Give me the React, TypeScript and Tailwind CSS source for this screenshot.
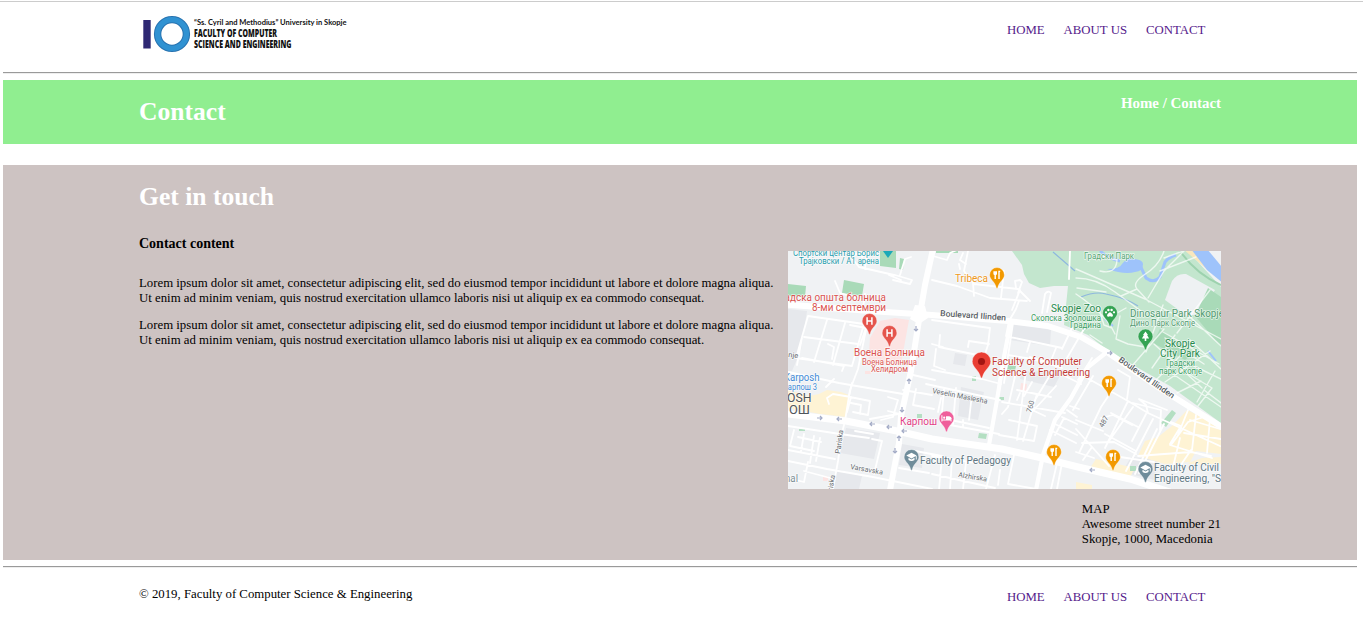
import React from "react";

const links = ["HOME", "ABOUT US", "CONTACT"];

function Nav() {
  return (
    <nav className="flex gap-[19px] pr-[15.6px] text-[#551a8b]">
      {links.map((l) => (
        <a key={l} href="#" className="whitespace-nowrap">
          {l}
        </a>
      ))}
    </nav>
  );
}

function Rule() {
  return <div className="h-[2px] border-t border-b border-t-[#9a9a9a] border-b-[#eeeeee]" />;
}

function Logo() {
  return (
    <svg width="210" height="44" viewBox="0 0 210 44" className="block" fontFamily="'Open Sans', 'Noto Sans', sans-serif">
      <rect x="4.3" y="8" width="7.4" height="28.5" fill="#2e2873" />
      <circle cx="33" cy="22" r="14.4" fill="none" stroke="#2873b0" strokeWidth="7.4" />
      <circle cx="33" cy="22" r="14.4" fill="none" stroke="#3092d2" strokeWidth="5.4" />
      <g fill="#111">
        <text x="55" y="13.4" fontSize="8.4" fontWeight="700" fontFamily="Lato, sans-serif" textLength="152.5" lengthAdjust="spacingAndGlyphs">
          “Ss. Cyril and Methodius” University in Skopje
        </text>
        <text x="55" y="24.8" fontSize="9.8" fontWeight="800" textLength="83" lengthAdjust="spacingAndGlyphs">
          FACULTY OF COMPUTER
        </text>
        <text x="55" y="36" fontSize="9.8" fontWeight="800" textLength="97.5" lengthAdjust="spacingAndGlyphs">
          SCIENCE AND ENGINEERING
        </text>
      </g>
    </svg>
  );
}

type PinProps = { x: number; y: number; color: string; s?: number; children?: React.ReactNode };

// x, y is the centre of the pin's head
function Pin({ x, y, color, s = 1, children }: PinProps) {
  return (
    <g transform={`translate(${x} ${y}) scale(${s})`}>
      <path d="M0-7.5A7.4 7.4 0 0 1 7.4 0C7.4 4.5 2.2 6.5 .8 12.4Q0 14.2-.8 12.4C-2.2 6.5-7.4 4.5-7.4 0A7.4 7.4 0 0 1 0-7.5Z" fill={color} stroke="#fff" strokeOpacity=".55" strokeWidth=".7" />
      {children}
    </g>
  );
}

function Food({ x, y }: { x: number; y: number }) {
  return (
    <Pin x={x} y={y} color="#f29900">
      <path d="M-3.6-3.8h3.6v2.6q0 1.2-1.2 1.2h-1.2q-1.2 0-1.2-1.2z" fill="#fff" />
      <path d="M-1.8-1v5M2 4V-3.6h1.2" fill="none" stroke="#fff" strokeWidth="1.4" />
    </Pin>
  );
}

function Hospital({ x, y }: { x: number; y: number }) {
  return (
    <Pin x={x} y={y} color="#e5554c">
      <path d="M-2.4-3.7v7.4M2.4-3.7v7.4M-2.4 0h4.8" fill="none" stroke="#fff" strokeWidth="1.5" />
    </Pin>
  );
}

function School({ x, y }: { x: number; y: number }) {
  return (
    <Pin x={x} y={y} color="#6f8c9a">
      <path d="M-5.2-1.4 0-4.2l5.2 2.8L0 1.4zM-3 .8v2.2Q0 5 3 3V.8L0 2.4zM4.3-1h.9v3.6h-.9z" fill="#fff" />
    </Pin>
  );
}

type LabelProps = {
  x: number;
  y: number;
  w: number;
  size?: number;
  fill: string;
  rotate?: number;
  weight?: number;
  children: string;
};

function Label({ x, y, w, size = 10, fill, rotate = 0, weight = 400, children }: LabelProps) {
  return (
    <text
      transform={`translate(${x} ${y}) rotate(${rotate})`}
      fontSize={size}
      fontWeight={weight}
      fill={fill}
      textLength={w}
      lengthAdjust="spacingAndGlyphs"
      stroke="#fff"
      strokeOpacity=".65"
      strokeWidth="1.6"
      strokeLinejoin="round"
      paintOrder="stroke"
    >
      {children}
    </text>
  );
}

function CampusMap() {
  return (
    <svg width="433" height="238" viewBox="788 251 433 238" className="block" fontFamily="Roboto, 'Liberation Sans', sans-serif">
      <rect x="788" y="251" width="433" height="238" fill="#f0f2f4" />

      {/* built-up blocks */}
      <g fill="#e6e8ec">
        <path d="M788 309 807 311 801 350 792 371H788zM846 428l34 5-6 26-34-6zM1013 323l38 7-1 16-40-6zM955 353l12 2-2 11-12-2zM961 387l23 5-6 28-20-4zM1022 371l40 1-8 15-34-8zM902 444l22 4-2 20-23-3zM1131 457l27 3-4 20-32-8z" />
        <path d="M836 469l26 7-3 13h-26z" />
      </g>
      <path d="M895 318l14 2-8 44-33 1 2-27 10-17zM1021 383l6 1-1 8-6-1zM865 371h6v3h-6zM823 476h5v5h-5z" fill="#fce4e3" />
      <g fill="#fef3d4">
        <path d="M788 390l21 6 10-2 8-4 14 2 8 3-3 22-26-3-32-6zM1187 410l34 16v28l-25-3-6 11-25 2-27-8 7-15 13-4 15-12zM1096 459l39 9-6 11-39-11zM1076 482l16 3v4h-16zM1188 463l14-5 19-1v7h-32z" />
      </g>

      {/* parks */}
      <path d="M1014 251H1188L1221 287V423L1170 386 1124 360 1107 350 1088 335 1064 325 1068 286 1054 286 1040 288 1029 283 1024 274 1022 265 1012 251z" fill="#c3e6ce" />
      <path d="M1165 300 1172 281Q1177 273 1186 274L1215 290 1199 314 1187 316z" fill="#eef1f3" />
      <path d="M1208 288l13 9v50l-26-31z" fill="#a9dab8" />
      <path d="M1160 329l34 24-9 7-32-17z" fill="#a9dab8" />
      <path d="M880 251h16v17l-16-2zM900 258l4 1-1 11-4-1zM844 280l20 4-2 12-20-3zM788 284l18 2-1 11-17-1zM936 251h22v2h-22zM1008 365l8 1-1 5-8-1z" fill="#a9dab8" />
      <path d="M972 376h4v5h-4zM998 397h6v3h-6zM979 433l8 1-1 5-8-1zM917 414h5v4h-5zM1172 410l4 3-10 14-5-4zM1130 466h6v5h-6zM799 429h6v2h-6z" fill="#b4dfc2" />

      {/* water */}
      <path d="M1183 249h22l18 20v14z" fill="#f9e7bd" />
      <path d="M1191 249h16l16 19v15l-16-13z" fill="#9ec3fb" />
      <path d="M1180 251Q1196 274 1221 285" fill="none" stroke="#9dd2ae" strokeWidth="2" />
      <path d="M1107 269q13 0 15-5 6-8 13-5 8 1 8 5 0 7-8 8-10 3-28-3z" fill="#9ec3fb" />
      <g fill="none" stroke="#9ec3fb">
        <path d="M1100 251q9 8 20 10M1138 261l8 17q8 6 14-1l5-15q4-5 11-7" strokeWidth="3" />
        <path d="M1081 297q14-6 25-3 20 4 32 12M1053 252l22 19" strokeWidth="1.2" stroke="#8eb7df" />
        <path d="M1105 319l8 7M1208 351l8 10" strokeWidth="2" />
      </g>

      {/* minor streets */}
      <g fill="none" stroke="#fff" strokeWidth="1.8" strokeLinejoin="round" strokeLinecap="round">
        <path d="M858 253l-7 4 8 10 35 8M868 252l-6 5M895 275l17 5-2 4-17-4M835 281l5 12 23 7M865 294l-2 14M867 251l-2 18M900 275l5-16 6-2M889 275l12 5" />
        <path d="M808 316l56 8-12 42-56-8zM827 320l-13 42M845 323l-12 42M804 337l54 7M802 338l-5 27M850 325l16 3-6 17M828 344l6 3-2 12M802 358l42 8-2 5M870 310l-12 59-8 21-5 31-3 12-4 28-5 28" />
        <path d="M788 372l51 11 64 11M826 387l8-8M829 404l-2-6 6-4 18 3-4 15M850 397l20 4-2 14-15-3M851 403l10 2-1 9M852 383l-3 13M870 419l28-5M888 397l10 3-5 17-12 3M903 390l29 5M913 375l22 5M916 389l-3 16 21 4M888 411l12 3" />
        <path d="M788 426l52 8 29 4M788 450l47 9M794 430l-4 16 24 5M804 434l-3 17M814 436l-4 27M788 461l39 8 46 8 59 12M798 437l23 5M820 438l-4 23M808 462l-4 20-16-4M804 471l30 8M872 439l10 2-8 33M855 431l18 3" />
        <path d="M933 256l14 4 3-7 16-7M968 251l-4 20 10 13 44 5 12 12M966 264l-6-4 3-7M932 280l25 6 33 12 37 3M959 264l1 5M973 283l1 13M996 280l3-11 5 2-3 27M1018 293l4-11-2-2-5 1 1 7M1019 301l-3 8-7 12-3 15M1042 313l3-19q3-4 6-1l-4 19M1020 290l-8 20M1070 251l-1 28" />
        <path d="M932 320l58 8-2 17-3 9M968 347l1-6 20 3M940 335l-1 12 24 5 24 5M932 344l11 3M936 349l-2 17 11 4M1010 337l38 8 14 3M1030 342l-3 10M1056 348l-6 15-20-6M1062 349l10-21M1084 329l-17 29M1008 355l24 4 30 9M1013 323l-9 60" />
        <path d="M926 384l74 16M932 370l50 9 19 5M944 389l-3 35M956 388l-3 36M941 398l-3 14M972 394l-3 26M941 418l48 10M963 420v7M950 425l49 9M1002 402l63 11M1026 371l-9 69M1016 372l-8 35-6 7M1017 390l34 7M1020 393l-3 7M1032 382l-8 14M1037 394l-14 47M1009 420l28 6-3 15-35-6M1030 409l15 7M1052 372l-17 28M1056 386l-23 25M1065 376l16 8M1062 417l15 7M1067 410l10 7M1070 406l9 3M1050 430l26 13M1055 424l22 11M1064 418l-9 17" />
        <path d="M910 450l32 6-3 34M932 456l44 7M932 474l63 14M952 459l-2 30M966 462l-3 27M995 455l-9 34M1014 455l-6 29 28 5M1000 470l-2 15M1058 459l-7 30M1062 463l-5 26M899 468l30 5" />
        <path d="M1080 374l48 27 20 12 72 33M1092 358l-14 22M1093 376l-20 34M1113 389l-12 18-22 46M1118 370l12 7-3 22M1128 401l-23 47M1133 407l-24 34M1133 403l28 7-1 20M1146 414l-14 27M1153 419l-27 52M1171 422l10 4-11 18M1148 413l-2-8-7-6 28 11M1111 413l27 14M1101 418l12-3 19 10M1105 434l31 17M1076 420l27 11M1082 443l32-1 22 12M1076 452l18 6M1076 429l33 37M1092 447l-9 13M1164 424l-25 49M1170 445l42 13M1157 429l-22 45M1171 445l17-23 19-6M1188 410l-10 25M1190 420l30 9M1184 433l37 6M1196 415l-4 35M1210 419l-3 34M1180 438l-7 29M1191 450l-15 22M1138 456l53-4 20 4M1120 457l34 5" />
        <path d="M1076 278q20 0 39 14l30 22M1076 294q30 20 39 40M1077 288l29 4M1076 269l69 30 19 10 57 30M1117 260q-1 15-17 11M1117 260l-14-4M1164 251q-5 15-20 24-12 8-7 14l12 13M1160 271l36-14M1164 258l19-7M1184 251l-20 20-16 27M1121 296l16-7M1120 316l-4 23 12 5 17 3M1098 306l6 19 8 3M1090 335l12 8M1117 313l9-5M1163 305l-17 47M1188 315l33 31M1210 290l-33 43M1163 332l56 32M1164 329l-32 37M1185 351l-31 31M1165 338l39 26M1175 335l-23 33M1154 344l32 29 16 15M1210 351l-45 31M1190 340l31 29M1201 381l-24 12M1194 366l27 13M1173 374l48 33M1215 371l-18 31M1182 370l30 18-14 18M1204 390l17 13" strokeOpacity=".7" strokeWidth="1.4" />
      </g>

      {/* main roads */}
      <g fill="none" stroke="#fff" strokeLinejoin="round">
        <path d="M780 304 870 311 932 315 1008 321 1048 326 1081 337 1107 352 1161 389 1225 429" strokeWidth="6" />
        <path d="M780 413 846 421 897 431 932 439 1002 449 1042 458 1078 467 1130 479 1170 492" strokeWidth="7" />
        <path d="M933 249 925 285 919 320 911 371 901 416 899 443 890 490" strokeWidth="6" />
        <path d="M1011 321 1004 357 997 400 989 445M1107 352 1088 367 1071 398 1055 420 1043 455 1036 490" strokeWidth="4.2" />
      </g>
      <path d="M915 305l10 1 3 12-9 6-9-5z" fill="#fff" />

      {/* one-way arrows */}
      <g fill="none" stroke="#a3abc6" strokeWidth="1.2">
        <path d="M817 418h5m-2-2 2 2-2 2M842 419h-5m2-2-2 2 2 2M875 424h-5m2-2-2 2 2 2M892 427h-5m2-2-2 2 2 2M907 431h-5m2-2-2 2 2 2M1095 470h-5m2-2-2 2 2 2M1107 353h5m-2-2 2 2-2 2" />
        <path d="M916 326v5m-2-2 2 2 2-2M909 384v-5m-2 2 2-2 2 2M902 407v5m-2-2 2 2 2-2M899 441v-5m-2 2 2-2 2 2M895 448v5m-2-2 2 2 2-2" />
      </g>

      {/* street names */}
      <g>
        <Label x={940} y={316} w={66} size={8.4} fill="#5a5f65" rotate={4} weight={500}>Boulevard Ilinden</Label>
        <Label x={1118} y={361} w={66} size={8.4} fill="#5a5f65" rotate={35} weight={500}>Boulevard Ilinden</Label>
        <Label x={932} y={393} w={56} size={7.3} fill="#686d73" rotate={11}>Veselin Maslesha</Label>
        <Label x={850} y={469} w={33} size={7.3} fill="#686d73" rotate={10}>Varsavska</Label>
        <Label x={958} y={477} w={29} size={7.3} fill="#686d73" rotate={9}>Alzhirska</Label>
        <Label x={840} y={454} w={24} size={7.3} fill="#686d73" rotate={-82}>Pariska</Label>
        <Label x={831} y={499} w={24} size={7.3} fill="#686d73" rotate={-80}>Pariska</Label>
        <Label x={1031} y={413} w={12} size={7.3} fill="#686d73" rotate={-73}>760</Label>
        <Label x={1103} y={428} w={12} size={7.3} fill="#686d73" rotate={-62}>487</Label>
        <Label x={788} y={357} w={10} size={7.3} fill="#686d73" rotate={7}>nje</Label>
      </g>

      {/* pins */}
      <path d="M883 251h10l-5 7z" fill="#1ba9b8" />
      <Food x={997} y={275} />
      <Food x={1109} y={383} />
      <Food x={1054} y={452} />
      <Food x={1113} y={457} />
      <Hospital x={869.5} y={321} />
      <Hospital x={889.5} y={333} />
      <School x={911.5} y={457} />
      <School x={1145.5} y={469} />
      <Pin x={1110} y={313} color="#34a353">
        <path d="M-3 3q0-2 1.7-3 1.3-1.4 2.6 0Q3 1 3 3 2 4.4 0 3.3-2 4.4-3 3z" fill="#fff" />
        <g fill="#fff">
          <circle cx="-4" cy="-.7" r="1.1" />
          <circle cx="-1.6" cy="-3" r="1.2" />
          <circle cx="1.6" cy="-3" r="1.2" />
          <circle cx="4" cy="-.7" r="1.1" />
        </g>
      </Pin>
      <Pin x={1145.5} y={336.5} color="#34a353">
        <path d="M0-5 2.5-1.5H1.6L3.6 2H.8v2.6H-.8V2h-2.8l2-3.5h-.9z" fill="#fff" />
      </Pin>
      <Pin x={946.5} y={418.5} color="#ef5f9b">
        <path d="M-5.1-3.2h1V.9h8.2V-.4Q4.1-2 2.6-2H-.5V.9H5V3H4.1V1.9h-8.2V3h-1z" fill="#fff" />
        <path d="M-.5-2h3.1Q5-2 5-.2V1H-.5z" fill="#fff" />
        <circle cx="-2.3" cy="-.8" r="1.1" fill="#fff" />
      </Pin>
      <Pin x={981.5} y={361.5} color="#e93e33" s={1.26}>
        <circle r="2.8" fill="#a31512" />
      </Pin>

      {/* place names */}
      <g>
        <Label x={793} y={256} w={86} size={8.2} fill="#279dad">Спортски центар Борис</Label>
        <Label x={799} y={264} w={80} size={8.2} fill="#279dad">Трајковски / А1 арена</Label>
        <Label x={779} y={301} w={107} size={10} fill="#db5451">радска општа болница</Label>
        <Label x={812} y={311} w={74} size={10} fill="#db5451">8-ми септември</Label>
        <Label x={854} y={356} w={71} size={10} fill="#db5451">Воена Болница</Label>
        <Label x={862} y={364.5} w={55} size={8.2} fill="#db5451">Воена Болница</Label>
        <Label x={871} y={372} w={37} size={8.2} fill="#db5451">Хелидром</Label>
        <Label x={955} y={282} w={33} size={10} fill="#ef9922">Tribeca</Label>
        <Label x={992} y={365} w={90} size={10} fill="#c43b36">Faculty of Computer</Label>
        <Label x={992} y={376} w={98} size={10} fill="#c43b36">Science &amp; Engineering</Label>
        <Label x={1051} y={312} w={50} size={10} fill="#268a4d">Skopje Zoo</Label>
        <Label x={1031} y={320.5} w={70} size={8.2} fill="#3c9d64">Скопска Зоолошка</Label>
        <Label x={1070} y={328} w={31} size={8.2} fill="#3c9d64">Градина</Label>
        <Label x={1084} y={259} w={50} size={8.2} fill="#58a777">Градски Парк</Label>
        <Label x={1130} y={317} w={94} size={10} fill="#539a71">Dinosaur Park Skopje</Label>
        <Label x={1130} y={326} w={65} size={8.2} fill="#539a71">Дино Парк Скопје</Label>
        <Label x={1165} y={347} w={30} size={10} fill="#268a4d">Skopje</Label>
        <Label x={1160} y={357} w={40} size={10} fill="#268a4d">City Park</Label>
        <Label x={1166} y={366} w={29} size={8.2} fill="#3c9d64">Градски</Label>
        <Label x={1159} y={374} w={43} size={8.2} fill="#3c9d64">парк Скопје</Label>
        <Label x={784} y={381} w={35.5} size={10} fill="#438bd7">Karposh</Label>
        <Label x={783} y={390} w={34} size={8.2} fill="#438bd7">Карпош 3</Label>
        <Label x={787} y={402} w={24.5} size={12.3} fill="#50555a">OSH</Label>
        <Label x={789} y={413.5} w={21} size={12} fill="#50555a">ОШ</Label>
        <Label x={900} y={425} w={37} size={10} fill="#e33e86">Карпош</Label>
        <Label x={920} y={464} w={91} size={10} fill="#607783">Faculty of Pedagogy</Label>
        <Label x={1154} y={471} w={65} size={10} fill="#607783">Faculty of Civil</Label>
        <Label x={1154} y={482} w={67} size={10} fill="#607783">Engineering, "S</Label>
        <Label x={785} y={482} w={13} size={10} fill="#7f9198">nal</Label>
      </g>
    </svg>
  );
}

const lorem = [
  "Lorem ipsum dolor sit amet, consectetur adipiscing elit, sed do eiusmod tempor incididunt ut labore et dolore magna aliqua.",
  "Ut enim ad minim veniam, quis nostrud exercitation ullamco laboris nisi ut aliquip ex ea commodo consequat.",
];

function Lorem() {
  return (
    <p className="whitespace-nowrap">
      {lorem[0]}
      <br />
      {lorem[1]}
    </p>
  );
}

export default function App() {
  return (
    <div className="h-[627px] overflow-hidden bg-white pt-px font-['Liberation_Serif',serif] text-[12.8px] leading-[15px] text-black">
      <div className="h-px bg-[#cccccc]" />
      <div className="ml-[3px] w-[1354px]">
        <header className="flex h-[70px] justify-between px-[136px]">
          <div className="pt-[10px]">
            <Logo />
          </div>
          <div className="pt-[21px]">
            <Nav />
          </div>
        </header>
        <Rule />
        <section className="mt-[6px] flex h-16 justify-between bg-[#90ee90] px-[136px] font-bold text-white">
          <h1 className="pt-[17px] text-[25.6px] leading-[30px]">Contact</h1>
          <h3 className="pt-[15px] text-[14.9px] leading-[17px]">Home / Contact</h3>
        </section>
        <section className="mt-[21px] h-[395px] bg-[#cdc3c2] px-[136px]">
          <h1 className="pt-[17px] text-[25.6px] leading-[30px] font-bold text-white">Get in touch</h1>
          <div className="flex justify-between">
            <div>
              <h4 className="pt-[24px] pb-[24px] text-[14px] leading-[16px] font-bold">Contact content</h4>
              <div className="flex flex-col gap-3">
                <Lorem />
                <Lorem />
              </div>
            </div>
            <div className="flex flex-col items-end pt-[39px]">
              <CampusMap />
              <address className="pt-[13px] not-italic">
                MAP
                <br />
                Awesome street number 21
                <br />
                Skopje, 1000, Macedonia
              </address>
            </div>
          </div>
        </section>
        <div className="mt-[6px]">
          <Rule />
        </div>
        <footer className="flex justify-between px-[136px]">
          <p className="pt-[19px]">© 2019, Faculty of Computer Science &amp; Engineering</p>
          <div className="pt-[22px]">
            <Nav />
          </div>
        </footer>
      </div>
    </div>
  );
}
